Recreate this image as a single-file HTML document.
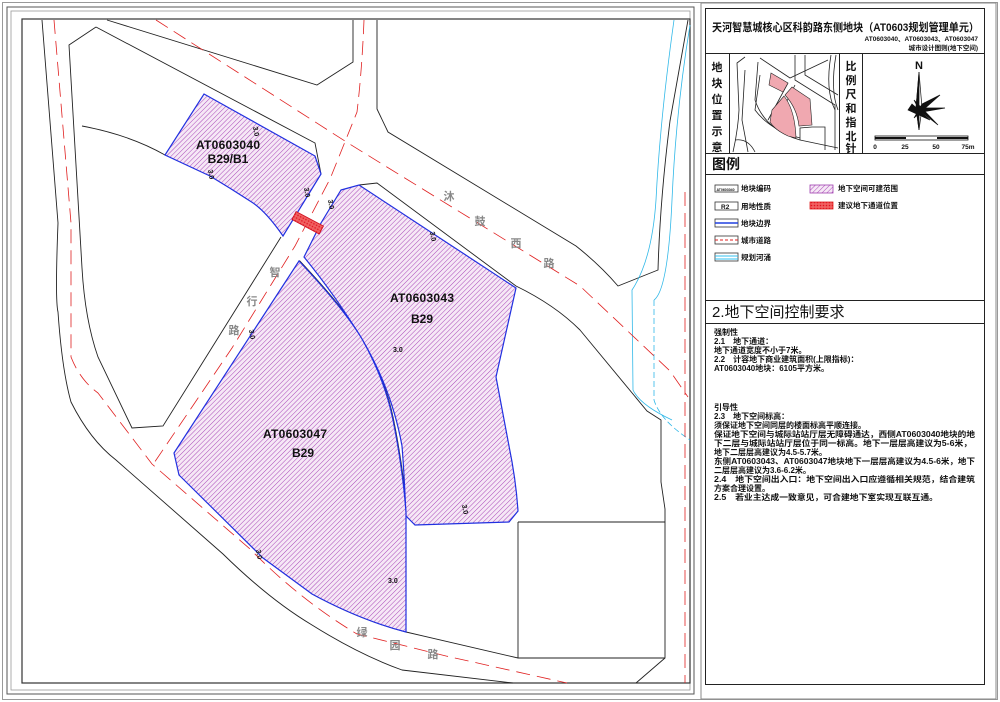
<!DOCTYPE html>
<html><head><meta charset="utf-8"><style>
html,body{margin:0;padding:0;background:#fff;}
body{width:1000px;height:702px;overflow:hidden;position:relative;font-family:"Liberation Sans","Noto Sans CJK SC",sans-serif;}
svg{position:absolute;left:0;top:0;}
.t{font-family:"Liberation Sans","Noto Sans CJK SC",sans-serif;font-weight:bold;}
</style></head><body>
<svg width="1000" height="702" viewBox="0 0 1000 702">
<defs>
<pattern id="h" width="3.4" height="3.4" patternUnits="userSpaceOnUse" patternTransform="rotate(45)">
<rect width="3.4" height="3.4" fill="#f6e8f6"/><line x1="0" y1="0" x2="0" y2="3.4" stroke="#a848b8" stroke-width="1"/>
</pattern>
<pattern id="r" width="3" height="3" patternUnits="userSpaceOnUse">
<rect width="3" height="3" fill="#f06060"/><circle cx="1.5" cy="1.5" r="0.8" fill="#e01020"/>
</pattern>
</defs>
<rect x="2.5" y="2.5" width="995" height="697" fill="none" stroke="#999" stroke-width="1"/>
<rect x="7" y="7" width="687" height="687" fill="none" stroke="#555" stroke-width="1"/>
<rect x="11" y="11" width="679" height="679" fill="none" stroke="#999" stroke-width="0.8"/>
<rect x="22" y="19" width="668" height="664" fill="none" stroke="#333" stroke-width="1.2"/>

<g fill="none" stroke="#222" stroke-width="0.9">
<path d="M42 20 L58 223 Q55 300 58 312 Q62 370 71 402 Q90 440 116 460 L223 554 Q270 600 312 625 Q360 655 402 670 L513 683"/>
<path d="M96 27 L69 45 L82 268 Q85 320 98 357 L132 428 L163 426 L281 237"/>
<path d="M96 27 L315 143 L321 174"/>
<path d="M107 20 L317 85 L353 62 L353 20"/>
<path d="M82 126 Q130 135 165 155"/>
<path d="M377 20 L377 109 L388 132 L576 246 Q600 265 618 286 L658 270 Q660 200 670 121 L688 20"/>
<path d="M359 185 L377 183 L516 286 Q555 305 580 330 L647 411 L661 420 L661 482 L665 509 L665 658 L636 683"/>
<path d="M518 522 L665 522 M518 522 L518 658 M406 632 L518 658 L665 658"/>
<path d="M179 475 L312 594 Q360 620 406 632"/>
<path d="M299 261 Q345 310 362 339 Q385 380 393 420 Q403 470 406 513" stroke-width="2.2"/>
</g>
<g fill="none" stroke="#fff" stroke-width="0.8">
<path d="M299 261 Q345 310 362 339 Q385 380 393 420 Q403 470 406 513"/>
</g>
<g fill="none" stroke="#30b8e8" stroke-width="0.8">
<path d="M674 20 Q660 120 656 200 Q652 260 632 290 L633 390 Q640 405 672 420"/>
<path d="M690 25 Q676 110 672 200 Q668 290 654 300"/>
<path d="M654 300 L654 400 Q660 420 690 440" stroke-dasharray="6 3"/>
</g>
<g fill="none" stroke="#e02020" stroke-width="0.8" stroke-dasharray="14 7">
<path d="M54 20 L71 223 L71 357 Q80 380 98 393 L152 464 L250 549 Q300 600 357 634 L446 656 L567 683"/>
<path d="M156 20 L348 143 L580 286 L670 371 L688 397"/>
<path d="M364 20 Q362 70 357 112 L330 179 L295 246 L232 348 L152 466"/>
<path d="M685 192 L685 683"/>
</g>
<g stroke="#2030e0" stroke-width="1.2" fill="url(#h)">
<path d="M204 94 L315 156 L321 174 L283 236 Q265 210 250 201 Q230 188 210 176 L165 155 Z"/>
<path d="M341 190 L359 185 L516 288 L496 377 L509 446 Q516 480 518 511 L509 522 L415 525 L406 516 Q404 470 402 446 Q392 390 362 339 Q335 295 304 257 L321 223 Z"/>
<path d="M299 261 Q345 310 362 339 Q385 380 393 420 Q403 470 406 513 L406 632 Q360 620 312 594 L263 558 L179 475 L174 453 Z"/>
</g>
<rect x="292" y="218" width="31" height="9" fill="url(#r)" stroke="#d01020" stroke-width="0.8" transform="rotate(28 307 223)"/>
<g class="t" font-size="12" fill="#111" text-anchor="middle">
<text x="228" y="149" textLength="64">AT0603040</text><text x="228" y="163">B29/B1</text>
<text x="422" y="302" textLength="64">AT0603043</text><text x="422" y="323">B29</text>
<text x="295" y="438" textLength="64">AT0603047</text><text x="303" y="457">B29</text>
</g>
<g class="t" font-size="7" fill="#111">
<text x="393" y="352">3.0</text><text x="388" y="583">3.0</text>
<text x="253" y="127" transform="rotate(80 253 127)">3.0</text>
<text x="208" y="170" transform="rotate(80 208 170)">3.0</text>
<text x="304" y="188" transform="rotate(80 304 188)">3.0</text>
<text x="328" y="200" transform="rotate(80 328 200)">3.0</text>
<text x="430" y="232" transform="rotate(80 430 232)">3.0</text>
<text x="249" y="330" transform="rotate(80 249 330)">3.0</text>
<text x="462" y="505" transform="rotate(80 462 505)">3.0</text>
<text x="256" y="550" transform="rotate(80 256 550)">3.0</text>
</g>
<g class="t" font-size="11" fill="#888" text-anchor="middle">
<text x="449" y="200">沐</text><text x="480" y="225">鼓</text><text x="516" y="247">西</text><text x="549" y="267">路</text>
<text x="275" y="276">智</text><text x="252" y="305">行</text><text x="234" y="334">路</text>
<text x="362" y="636">绿</text><text x="395" y="649">园</text><text x="433" y="658">路</text>
</g>

<rect x="701" y="3" width="295" height="696" fill="none" stroke="#888" stroke-width="1"/>
<rect x="705.5" y="8.5" width="279" height="676" fill="none" stroke="#222" stroke-width="1"/>
<line x1="705" y1="53.5" x2="985" y2="53.5" stroke="#222"/>
<line x1="705" y1="153.5" x2="985" y2="153.5" stroke="#222"/>
<line x1="705" y1="174.5" x2="985" y2="174.5" stroke="#222"/>
<line x1="705" y1="300.5" x2="985" y2="300.5" stroke="#222"/>
<line x1="705" y1="323.5" x2="985" y2="323.5" stroke="#222"/>
<line x1="729.5" y1="54" x2="729.5" y2="153" stroke="#222"/>
<line x1="839.5" y1="54" x2="839.5" y2="153" stroke="#222"/>
<line x1="862.5" y1="54" x2="862.5" y2="153" stroke="#222"/>
<text class="t" x="712" y="31" font-size="11" fill="#111" textLength="267" lengthAdjust="spacingAndGlyphs">天河智慧城核心区科韵路东侧地块（AT0603规划管理单元）</text>
<text class="t" x="978" y="41" font-size="6.5" fill="#111" text-anchor="end">AT0603040、AT0603043、AT0603047</text>
<text class="t" x="978" y="50" font-size="6.5" fill="#111" text-anchor="end">城市设计图则(地下空间)</text>
<g class="t" font-size="11" fill="#111" text-anchor="middle">
<text x="717" y="71">地</text><text x="717" y="87">块</text><text x="717" y="103">位</text><text x="717" y="119">置</text><text x="717" y="135">示</text><text x="717" y="151">意</text>
<text x="851" y="70">比</text><text x="851" y="84">例</text><text x="851" y="98">尺</text><text x="851" y="112">和</text><text x="851" y="126">指</text><text x="851" y="140">北</text><text x="851" y="152">针</text>
</g>
<g fill="none" stroke="#222" stroke-width="0.8">
<path d="M733 152 Q738 130 739 110 L737 63 L745 57 M748 152 L742 120 L745 70"/>
<path d="M760 58 L790 78 L828 60 M758 62 L755 100 Q765 130 800 140 L838 148"/>
<path d="M760 75 L755 110 Q770 130 800 138"/>
<path d="M795 55 L795 80 L835 105 L835 150 M805 55 L805 75 L838 95"/>
<path d="M788 83 L768 120 M795 85 L775 125"/>
<path d="M800 140 L800 128 L812 127 L825 127 L825 150"/>
<path d="M831 55 Q825 90 835 110 M836 55 Q830 90 838 110"/>
<path d="M735 140 Q748 138 755 152"/>
</g>
<g fill="#f0a8b0" stroke="#222" stroke-width="0.6">
<path d="M771 73 L788 83 L783 92 L769 85 Z"/>
<path d="M792 87 L810 99 L812 125 L799 126 Q797 108 785 95 Z"/>
<path d="M784 96 Q795 110 796 138 L788 136 Q775 130 770 122 L772 110 Z"/>
</g>
<text class="t" x="919" y="69" font-size="11" fill="#111" text-anchor="middle">N</text>
<g stroke="#111" stroke-width="0.7">
<path d="M919 72 L922 108 L919 130 L916 108 Z" fill="#fff"/>
<path d="M919 72 L919 130 L916 108 Z" fill="#111"/>
<path d="M910 108 L945 108 L922 112 Z" fill="#111"/>
<path d="M914 100 L938 125 L919 110 Z" fill="#111"/>
<path d="M914 118 L940 95 L922 104 Z" fill="#111"/>
<path d="M912 104 L930 120 L908 110 Z" fill="#111"/>
</g>
<rect x="875" y="136" width="93" height="4" fill="#fff" stroke="#111" stroke-width="0.8"/>
<rect x="875" y="137" width="31" height="2" fill="#111"/><rect x="937" y="137" width="31" height="2" fill="#111"/>
<g class="t" font-size="6.5" fill="#111" text-anchor="middle">
<text x="875" y="149">0</text><text x="905" y="149">25</text><text x="936" y="149">50</text><text x="968" y="149">75m</text>
</g>
<text class="t" x="712" y="169" font-size="14" fill="#111">图例</text>
<g stroke="#333" stroke-width="0.8">
<rect x="715" y="185" width="23" height="7" fill="#fff"/>
<rect x="715" y="202" width="23" height="8" fill="#fff"/>
<rect x="715" y="219" width="23" height="8" fill="#fff"/>
<rect x="715" y="236" width="23" height="8" fill="#fff"/>
<rect x="715" y="253" width="23" height="8" fill="#fff"/>
<rect x="810" y="185" width="23" height="8" fill="url(#h)" stroke="#a040b0"/>
<rect x="810" y="202" width="23" height="7" fill="url(#r)" stroke="#e02020"/>
</g>
<line x1="715" y1="223" x2="738" y2="223" stroke="#2040e0" stroke-width="1.5"/>
<line x1="715" y1="240" x2="738" y2="240" stroke="#e02020" stroke-width="1" stroke-dasharray="3 2"/>
<line x1="715" y1="256" x2="738" y2="256" stroke="#30c0f0" stroke-width="1"/><line x1="715" y1="259" x2="738" y2="259" stroke="#30c0f0" stroke-width="1"/>
<g class="t" font-size="7.5" fill="#111">
<text x="716.5" y="191" font-size="3.5">AT0603040</text>
<text x="721" y="209" font-size="6.5">R2</text>
<text x="741" y="191">地块编码</text><text x="741" y="209">用地性质</text><text x="741" y="226">地块边界</text><text x="741" y="243">城市道路</text><text x="741" y="260">规划河涌</text>
<text x="838" y="191">地下空间可建范围</text><text x="838" y="208">建议地下通道位置</text>
</g>
<text x="712" y="317" font-size="15" fill="#111" font-family="Liberation Sans, Noto Sans CJK SC, sans-serif">2.地下空间控制要求</text>
<g class="t" font-size="8" fill="#111">
<text x="714" y="335">强制性</text>
<text x="714" y="344">2.1　地下通道：</text>
<text x="714" y="353">地下通道宽度不小于7米。</text>
<text x="714" y="362">2.2　计容地下商业建筑面积(上限指标)：</text>
<text x="714" y="371">AT0603040地块：6105平方米。</text>
<text x="714" y="410">引导性</text>
<text x="714" y="419">2.3　地下空间标高：</text>
<text x="714" y="428">须保证地下空间同层的楼面标高平顺连接。</text>
<text x="714" y="437" textLength="261" lengthAdjust="spacingAndGlyphs">保证地下空间与城际站站厅层无障碍通达，西侧AT0603040地块的地</text>
<text x="714" y="446" textLength="258" lengthAdjust="spacingAndGlyphs">下二层与城际站站厅层位于同一标高。地下一层层高建议为5-6米，</text>
<text x="714" y="455">地下二层层高建议为4.5-5.7米。</text>
<text x="714" y="464" textLength="261" lengthAdjust="spacingAndGlyphs">东侧AT0603043、AT0603047地块地下一层层高建议为4.5-6米，地下</text>
<text x="714" y="473">二层层高建议为3.6-6.2米。</text>
<text x="714" y="482" textLength="261" lengthAdjust="spacingAndGlyphs">2.4　地下空间出入口：地下空间出入口应遵循相关规范，结合建筑</text>
<text x="714" y="491">方案合理设置。</text>
<text x="714" y="500" textLength="224" lengthAdjust="spacingAndGlyphs">2.5　若业主达成一致意见，可合建地下室实现互联互通。</text>
</g>
</svg>
</body></html>
